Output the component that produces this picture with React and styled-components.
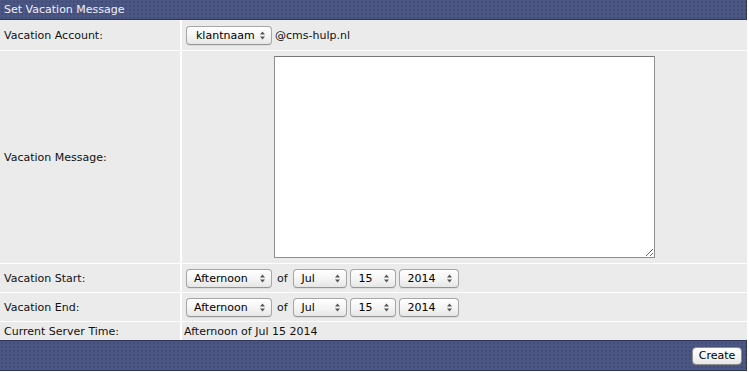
import React from 'react'
import styled, { createGlobalStyle } from 'styled-components'

const GlobalStyle = createGlobalStyle`
    body{
        margin: 0;
        background: #fff;
        font-family: "DejaVu Sans", Verdana, sans-serif;
        font-size: 11px;
        color: #111;
    }
`;

const Panel = styled.div`
    width: 747px;
`;

const Bar = styled.div`
    height: ${p => p.tall ? '29px' : '19px'};
    background-color: #4c5683;
    background-image: radial-gradient(rgba(30,38,80,0.3) 0.6px, transparent 0.9px);
    background-size: 4px 4px;
    border: 1px solid #2f3658;
    border-width: ${p => p.tall ? '1px 1px 1px 0' : '0 1px 1px 0'};
    color: #eef0f7;
    display: flex;
    align-items: center;
    justify-content: ${p => p.tall ? 'flex-end' : 'flex-start'};
    padding: 0 4px 0 4px;
    box-sizing: content-box;
`;

const Grid = styled.div`
    display: grid;
    grid-template-columns: 180px 1fr;
    column-gap: 2px;
    row-gap: 1px;
    background: #fff;
`;

const Label = styled.div`
    background: #ebebeb;
    display: flex;
    align-items: center;
    padding-left: 4px;
    height: ${p => p.h}px;
`;

const Field = styled.div`
    background: #ebebeb;
    display: flex;
    align-items: center;
    gap: ${p => p.gap ?? 4}px;
    padding-left: ${p => p.pad ?? 4}px;
    height: ${p => p.h}px;
`;

const Select = styled.div`
    position: relative;
    width: ${p => p.w}px;
    height: 19px;
    box-sizing: border-box;
    border: 1px solid #a6a6a6;
    border-bottom-color: #959595;
    border-radius: 4px;
    background: linear-gradient(#ffffff, #f4f4f4 55%, #e6e6e6);
    box-shadow: 0 1px 0 rgba(0,0,0,0.06);
    display: flex;
    align-items: center;
    padding-left: ${p => p.pad ?? 7}px;
    font-size: 11px;
    color: #000;
    svg{
        position: absolute;
        right: 6px;
        top: 4px;
    }
`;

const Of = styled.span`
    margin: 0 2px;
`;

const Message = styled.textarea`
    width: 381px;
    height: 202px;
    box-sizing: border-box;
    margin-left: 88px;
    border: 1px solid #8f8f8f;
    border-top-color: #777;
    background: #fff;
    resize: both;
`;

const Button = styled.button`
    font-family: "DejaVu Sans", Verdana, sans-serif;
    font-size: 11px;
    color: #000;
    height: 18px;
    width: 50px;
    padding: 0;
    border: 1px solid #8e8e8e;
    border-radius: 4px;
    background: linear-gradient(#ffffff, #f4f4f4 55%, #e6e6e6);
`;

function Arrows() {
    return (
        <svg width="5" height="9" viewBox="0 0 5 9">
            <path d="M0 3.5 L2.5 0.5 L5 3.5 Z M0 5.5 L2.5 8.5 L5 5.5 Z" fill="#555" />
        </svg>
    )
}

function Dropdown({ w, pad, children }) {
    return (
        <Select w={w} pad={pad}>
            {children}
            <Arrows />
        </Select>
    )
}

function DateSelect() {
    return (
        <>
            <Dropdown w={86}>Afternoon</Dropdown>
            <Of>of</Of>
            <Dropdown w={54} pad={8}>Jul</Dropdown>
            <Dropdown w={46} pad={8}>15</Dropdown>
            <Dropdown w={60} pad={8}>2014</Dropdown>
        </>
    )
}

function App() {
    return (
        <Panel>
            <GlobalStyle />
            <Bar>Set Vacation Message</Bar>
            <Grid>
                <Label h={30}>Vacation Account:</Label>
                <Field h={30}>
                    <Dropdown w={86} pad={9}>klantnaam</Dropdown>
                    <span style={{ marginLeft: -1 }}>@cms-hulp.nl</span>
                </Field>

                <Label h={212}>Vacation Message:</Label>
                <Field h={212}>
                    <Message />
                </Field>

                <Label h={28}>Vacation Start:</Label>
                <Field h={28} gap={3}><DateSelect /></Field>

                <Label h={28}>Vacation End:</Label>
                <Field h={28} gap={3}><DateSelect /></Field>

                <Label h={18}>Current Server Time:</Label>
                <Field h={18} pad={2}>Afternoon of Jul 15 2014</Field>
            </Grid>
            <Bar tall>
                <Button>Create</Button>
            </Bar>
        </Panel>
    )
}

export default App
